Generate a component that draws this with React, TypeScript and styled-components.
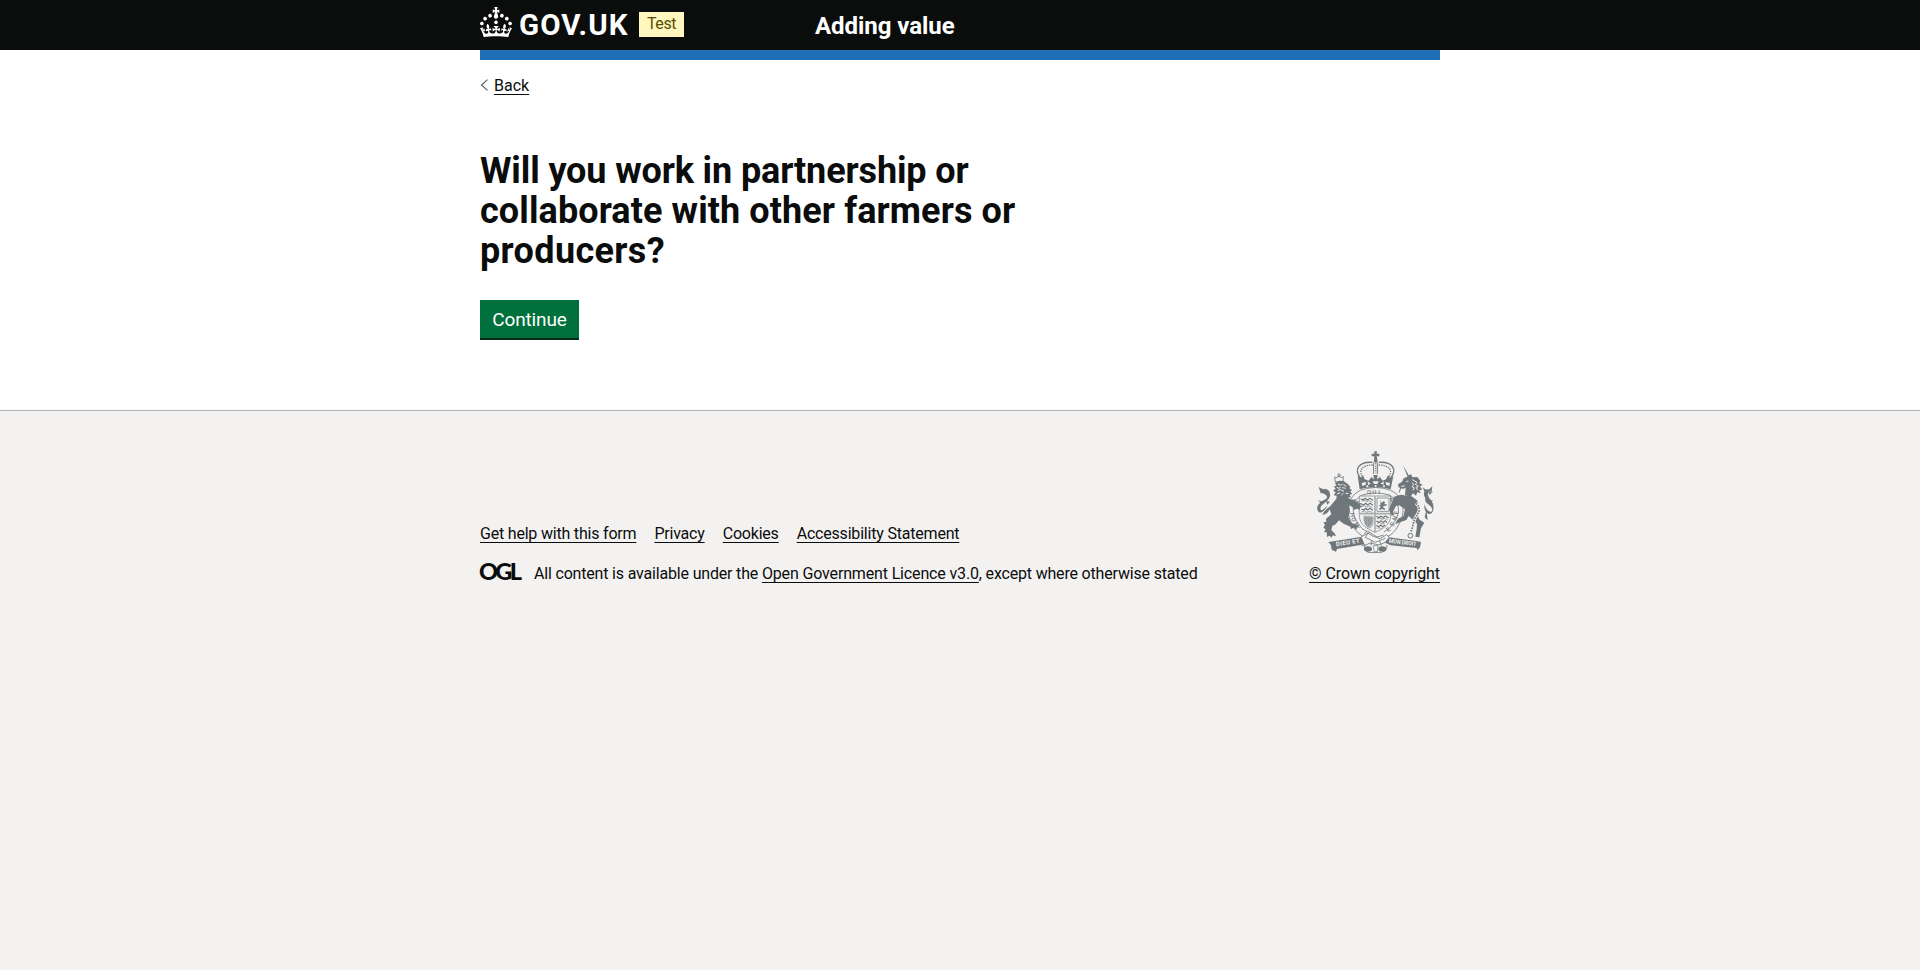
import React from "react";
import styled, { createGlobalStyle } from "styled-components";

const ink = "#0b0c0c";
const sans = `Roboto, "Liberation Sans", Arial, sans-serif`;

const GlobalStyle = createGlobalStyle`
  *, *::before, *::after { box-sizing: border-box; }
  html { background: #f3f2f1; }
  body { margin: 0; background: #fff; color: ${ink}; font-family: ${sans}; font-size: 16px; line-height: 20px; }
`;

const Container = styled.div`
  width: 960px;
  margin: 0 auto;
`;

const Header = styled.header`
  height: 60px;
  background: linear-gradient(${ink} 50px, #fff 50px);
  color: #fff;
`;

const HeaderBar = styled(Container)`
  display: grid;
  grid-template-columns: 335px 1fr;
  height: 60px;
  border-bottom: 10px solid #1d70b8;
`;

const Brand = styled.a`
  display: flex;
  align-items: flex-start;
  color: inherit;
  text-decoration: none;
`;

const Crown = styled.svg`
  flex: none;
  width: 32px;
  height: 30px;
  margin-top: 7px;
`;

const BrandName = styled.span`
  width: 119px;
  padding-left: 7px;
  margin-top: 9px;
  font-size: 29.5px;
  font-weight: 700;
  line-height: 32px;
  letter-spacing: 1.1px;
`;

const PhaseTag = styled.strong`
  width: 45px;
  height: 25px;
  margin: 12px 0 0 8px;
  background: #fff7bf;
  color: #594d00;
  font-size: 16px;
  font-weight: 400;
  line-height: 24px;
  letter-spacing: -0.4px;
  text-align: center;
`;

const ServiceName = styled.a`
  margin-top: 14px;
  color: inherit;
  font-size: 24px;
  font-weight: 700;
  line-height: 25px;
  letter-spacing: -0.05px;
  text-decoration: none;
`;

const Link = styled.a<{ $tracking?: number }>`
  color: ${ink};
  letter-spacing: ${(p) => p.$tracking ?? -0.2}px;
  text-decoration: underline;
  text-decoration-thickness: 1px;
  text-underline-offset: 3px;
`;

const BackRow = styled.nav`
  display: flex;
  gap: 5px;
  height: 20px;
  margin-top: 16px;
`;

const Chevron = styled.svg`
  width: 9px;
  height: 12px;
  margin-top: 3px;
`;

const Main = styled.main`
  padding: 55px 0 72px;
`;

const Heading = styled.h1`
  margin: 0 0 29px;
  font-size: 36px;
  font-weight: 700;
  line-height: 40px;
`;

const HeadingLine = styled.span<{ $tracking: number }>`
  display: block;
  letter-spacing: ${(p) => p.$tracking}px;
`;

const Button = styled.button`
  display: block;
  width: 99px;
  height: 38px;
  padding: 1px 0 0;
  border: 0;
  border-radius: 0;
  background: #00703c;
  box-shadow: 0 2px 0 #002d18;
  color: #fff;
  font: 400 19px/37px ${sans};
  letter-spacing: -0.12px;
`;

const Footer = styled.footer`
  min-height: 560px;
  padding-top: 40px;
  border-top: 1px solid #b1b4b6;
  background: #f3f2f1;
`;

const FooterColumns = styled(Container)`
  display: flex;
  justify-content: space-between;
  align-items: flex-end;
  height: 133px;
`;

const FooterLinks = styled.ul`
  display: flex;
  gap: 18px;
  margin: 0 0 20px;
  padding: 0;
  list-style: none;
`;

const Licence = styled.div`
  display: flex;
  gap: 13px;
  letter-spacing: -0.18px;
`;

const OglMark = styled.span`
  width: 41px;
  height: 20px;
  margin-top: -3px;
  font-family: Lato, ${sans};
  font-size: 23.5px;
  font-weight: 900;
  letter-spacing: -2.7px;
  text-indent: -1px;
`;

const Copyright = styled.a`
  display: flex;
  flex-direction: column;
  align-items: flex-end;
  color: ${ink};
  text-decoration: none;
`;

const Crest = styled.svg`
  width: 125px;
  height: 103px;
  margin-bottom: 11px;
`;

const CopyrightText = styled(Link).attrs({ as: "span" })``;

const crestGrey = "#6f777b";
const paper = "#f3f2f1";

function RoyalCrest() {
  return (
    <Crest viewBox="45 30 375 309" aria-hidden="true" fill={crestGrey}>
      {/* crown */}
      <path d="M223 34h8l-1 7h8v8h-8l2 9h-10l1-9h-8v-8h8z" />
      <circle cx="227" cy="62" r="6" />
      <g fill="none" stroke={crestGrey}>
        <path d="M184 118C158 88 178 64 218 67M269 118C296 88 276 64 236 67" strokeWidth="4" />
        <path d="M191 115C171 91 188 75 218 75M263 115C283 91 266 75 236 75" strokeWidth="4" strokeDasharray="4 3" />
        <path d="M221 68v34M232 68v34" strokeWidth="3" />
        <path d="M227 70v30" strokeWidth="4" strokeDasharray="3 4" />
      </g>
      <path d="M173 108l9 7 7-9 5 12 12 4 8-11 8 7-2-13h13l-2 13 9-7 8 11 10-4 6-12 7 9 9-7-8 40c-24-8-69-8-93 0z" />
      <g fill={paper}>
        <path d="M185 129l13-3-1 8-10 4zM203 124l9 7-8 4zM218 124h18l-4 8h-10zM242 131l9-7v10zM257 126l13 3-2 9-10-4z" />
        <circle cx="202" cy="139" r="3" /><circle cx="227" cy="138" r="3" /><circle cx="252" cy="139" r="3" />
      </g>

      {/* garter ring */}
      <g fill="none" stroke={crestGrey}>
        <path d="M181 151C143 169 133 216 159 258Q172 282 194 291M272 151C312 169 320 216 294 258Q281 282 260 291" strokeWidth="2.5" />
        <path d="M187 165C157 181 151 217 173 249Q184 268 202 276M268 165C299 181 304 217 281 249Q270 268 251 276" strokeWidth="2.5" />
        <path d="M181 151q46-17 91 0M187 165q40-12 81 0" strokeWidth="2.5" />
      </g>
      <g fontFamily={sans} fontSize="18" fontWeight="500">
        <text x="201" y="163">Q</text><text x="217" y="162">U</text><text x="235" y="162">I</text>
        <text transform="translate(150 219) rotate(82)">H</text>
        <text transform="translate(153 235) rotate(72)">O</text>
        <text transform="translate(161 251) rotate(60)">N</text>
        <text transform="translate(265 276) rotate(-40)">E</text>
        <text transform="translate(278 261) rotate(-54)">S</text>
        <text transform="translate(288 243) rotate(-68)">N</text>
        <text transform="translate(294 224) rotate(-80)">E</text>
      </g>

      {/* quartered shield */}
      <path d="M178 168h94v58c0 25-20 40-47 51-27-11-47-26-47-51z" fill={paper} stroke={crestGrey} strokeWidth="2" />
      <path d="M225 168v109M178 221h94" stroke="#aaaeaf" strokeWidth="5" />
      <g fill="none" stroke={crestGrey} strokeWidth="3.5">
        <path d="M182 176l8 4 5-5 7 5 7-5 10 6M183 191l8 4 6-5 6 5 7-5 9 6M184 207l8 3 5-5 6 5 7-5 9 6" />
        <path d="M185 183l8-2 7 4 8-3 9 5M185 199l8-2 7 4 8-3 9 5M185 215l8-2 7 4 8-3 9 3" strokeWidth="2" />
        <path d="M229 229l8 4 5-5 7 5 7-5 10 6M229 243l8 4 6-5 6 5 7-5 5 6M229 257l8 3 5-5 6 5 7-5" />
        <path d="M231 236l8-2 7 4 8-3 9 4M231 250l8-2 7 4 8-3M230 265l7-2 7 3" strokeWidth="2" />
      </g>
      <path d="M231 174h36v40h-36z" fill="none" stroke="#92989b" strokeWidth="3" />
      <path d="M241 181l4 8 5-5 6 2-4 7 9 0-3 5-7-1-2 5 7 4-3 4-6-4-7 4-3-4 6-6-7-3 6-3z" />
      <path d="M190 227h24l8 4-2 24-10 11q-22-10-20-39z" fill="#b5b8b9" />
      <path d="M195 231c8 6 17 2 21 3-1 13-6 22-13 26-8-10-11-17-8-29zM200 235v17M205 236v20M210 236v17" fill="none" stroke={crestGrey} strokeWidth="2" />

      {/* lion */}
      <path d="M104 111l6 3 7-7 6 6 7-3-1 16h-23zM114 102h6v8h-6z" fill="none" stroke={crestGrey} strokeWidth="2.5" />
      <path d="M105 128l12-6 14 1 12 9 8 8-3 5 8 5-5 5 6 7-8 2 4 8-9 1-6 13-7-8-7 7-7-12-8 4 1-10-9-1 6-9-8-5 8-6-6-7 8-1z" />
      <path d="M114 132l8 4 5-3M110 142l8 3 4-4M127 143l10 2M113 151l9-2 10 5M111 162l10-4M130 134l9 5M124 165l6-5M137 160l8 1" fill="none" stroke={paper} strokeWidth="3" />
      <path d="M114 171l18-2 24 10 12-1-3 7 12-2-3 7 10-1-4 7 8 3-9 5 1 6-10-4-7 4-6-9-9-5 2 19-5 17 10 17 16 5 9 9-9-1-2 8-7-7-9 4-2-7-20-9-14-10-10 12-10 5-3 12 11 11 3 8-9-3-5 7-5-6-8 4-1-14-8-1 5-8-7-5 5-9-5-7 9-2-1-9 16-13-5-15c-4 10-11 16-23 16q13-19 23-24z" />
      <path d="M82 197C72 219 58 222 54 213C45 198 62 185 78 177C88 168 71 158 62 160L56 141L68 147C86 144 94 160 89 171C87 184 60 193 61 207C66 217 72 204 82 197z" />
      <path d="M67 154l13 3-4-12 13 10M65 193l-11-12 16 5M79 183l11 2-9 10" />

      {/* unicorn */}
      <path d="M309 76l20 34-5 3z" />
      <path d="M322 110l11-8 4 10 15-1 9 12-3 6 10 6-8 4 7 10-9 1 4 9-10-2-4 10-9-7-8 11-16-6 2-22-8 4-13-5-2-9 12-8 5-10z" />
      <path d="M319 125l6-2M337 119l14 8-5 6 9 6-7 4 6 8M304 139l10-1M336 128l5 6-5 6 7 4-4 7" fill="none" stroke={paper} strokeWidth="3" />
      <path d="M282 170l20-6 33 5 16 12 7 20-6 24 7 14 14 9-10 17-5 27-12-2 4-22 1-17-15-14-10-9-7 12-17 6-17 7 9-17 16-7 5-21-17-12-10 2-9 17 4 10-8 2-8-18z" />
      <path d="M373 193C381 218 399 222 396 205C393 195 371 190 376 174C365 158 377 144 386 149L397 139L395 154C383 153 380 165 390 177C406 193 402 219 390 222C379 223 372 211 373 193z" />
      <path d="M373 154l-5-12 14 10M386 157l13-4-10 12M383 184l16-4-9 11M379 210l4 31-9-9z" />
      <path d="M281 179l-10-6 4 12M298 157l5-17" fill="none" stroke={crestGrey} strokeWidth="3" />
      <path d="M347 190c16 11 12 25 2 38s-9 36-18 49" fill="none" stroke={paper} strokeWidth="9" />
      <path d="M347 190c16 11 12 25 2 38s-9 36-18 49" fill="none" stroke={crestGrey} strokeWidth="5" strokeDasharray="5 3" />
      <circle cx="331" cy="287" r="7" fill={paper} stroke={crestGrey} strokeWidth="3" />

      {/* motto ribbons and buckle */}
      <path d="M85 306l15-2 77-12 20-1 4 18-15 5-75 13-3 8-13-6-2-13zM363 306l-14-3-72-10-18-2-4 17 17 8 78 8 2 7 8-9z" />
      <path d="M183 291l21-12 14 9 22 8 20-12 8 8-12 15-19 8-27-6-16 8z" fill={paper} stroke={crestGrey} strokeWidth="2.5" />
      <path d="M192 282l10-9 29 18 20-6M205 278l-9 14 30 15 30-12M184 318l11-5M195 315q-7 17 12 23l38-1q20-7 15-22M216 302l-3 14M239 303l5 14" fill="none" stroke={crestGrey} strokeWidth="2.5" />
      <ellipse cx="204" cy="327" rx="12" ry="8" /><ellipse cx="247" cy="327" rx="12" ry="8" />
      <path d="M220 317h14l-2 18h-10z" fill={paper} stroke={crestGrey} strokeWidth="2" />
      <g fill={paper} fontFamily={sans} fontSize="18" fontWeight="700">
        <text transform="translate(109 319) rotate(-9)" textLength="72">DIEU ET</text>
        <text transform="translate(266 308) rotate(7)" textLength="83" lengthAdjust="spacingAndGlyphs">MON DROIT</text>
      </g>
    </Crest>
  );
}

const footerLinks = ["Get help with this form", "Privacy", "Cookies", "Accessibility Statement"];

export default function App() {
  return (
    <>
      <GlobalStyle />
      <Header>
        <HeaderBar>
          <Brand href="#">
            <Crown viewBox="0 0 32 30" fill="#fff" aria-hidden="true">
              <path d="M22.6 10.4c-1 .4-2-.1-2.4-1-.4-.9.1-2 1-2.4.9-.4 2 .1 2.4 1s-.1 2-1 2.4m-5.9 6.7c-.9.4-2-.1-2.4-1-.4-.9.1-2 1-2.4.9-.4 2 .1 2.4 1s-.1 2-1 2.4m10.8-3.7c-1 .4-2-.1-2.4-1-.4-.9.1-2 1-2.4.9-.4 2 .1 2.4 1s0 2-1 2.4m3.3 4.8c-1 .4-2-.1-2.4-1-.4-.9.1-2 1-2.4.9-.4 2 .1 2.4 1s-.1 2-1 2.4M17 4.7l2.3 1.2V2.5l-2.3.7-.2-.2.9-3h-3.4l.9 3-.2.2c-.1.1-2.3-.7-2.3-.7v3.4L15 4.7c.1.1.1.2.2.2l-1.3 4c-.1.2-.1.4-.1.6 0 1.1.8 2 1.9 2.2h.7c1-.2 1.9-1.1 1.9-2.1 0-.2 0-.4-.1-.6l-1.3-4c-.1-.2 0-.2.1-.3m-7.6 5.7c.9.4 2-.1 2.4-1 .4-.9-.1-2-1-2.4-.9-.4-2 .1-2.4 1s0 2 1 2.4m-5 3c.9.4 2-.1 2.4-1 .4-.9-.1-2-1-2.4-.9-.4-2 .1-2.4 1s.1 2 1 2.4m-3.2 4.8c.9.4 2-.1 2.4-1 .4-.9-.1-2-1-2.4-.9-.4-2 .1-2.4 1s0 2 1 2.4m14.8 11c4.4 0 8.6.3 12.3.8 1.1-4.5 2.4-7 3.7-8.8l-2.5-.9c.2 1.3.3 1.9 0 2.7-.4-.4-.8-1.1-1.1-2.3l-1.2 4c.7-.5 1.3-.8 2-.9-1.1 2.5-2.6 3.1-3.5 3-1.1-.2-1.7-1.2-1.5-2.1.3-1.2 1.5-1.5 2.1-.1 1.1-2.3-.8-3-2-2.3 1.9-1.9 2.1-3.5.6-5.6-2.1 1.6-2.1 3.2-1.2 5.5-1.2-1.4-3.2-.6-2.5 1.6.9-1.4 2.1-.5 1.9.8-.2 1.1-1.7 2.1-3.5 1.9-2.7-.2-2.9-2.1-2.9-3.6.7-.1 1.9.5 2.9 1.9l.4-4.3c-1.1 1.1-2.1 1.4-3.2 1.4.4-1.2 2.1-3 2.1-3h-5.4s1.7 1.9 2.1 3c-1.1 0-2.1-.2-3.2-1.4l.4 4.3c1-1.4 2.2-2 2.9-1.9-.1 1.5-.2 3.4-2.9 3.6-1.9.2-3.4-.8-3.5-1.9-.2-1.3 1-2.2 1.9-.8.7-2.3-1.2-3-2.5-1.6.9-2.2.9-3.9-1.2-5.5-1.5 2-1.3 3.7.6 5.6-1.2-.7-3.1 0-2 2.3.6-1.4 1.8-1.1 2.1.1.2.9-.3 1.9-1.5 2.1-.9.2-2.4-.5-3.5-3 .6 0 1.2.3 2 .9l-1.2-4c-.3 1.1-.7 1.9-1.1 2.3-.3-.8-.2-1.4 0-2.7l-2.9.9C1.3 23 2.6 25.5 3.7 30c3.7-.5 7.9-.8 12.3-.8" />
            </Crown>
            <BrandName>GOV.UK</BrandName>
            <PhaseTag>Test</PhaseTag>
          </Brand>
          <ServiceName href="#">Adding value</ServiceName>
        </HeaderBar>
      </Header>
      <Container>
        <BackRow>
          <Chevron viewBox="0 0 9 12" aria-hidden="true">
            <path d="M7.5 .7L1.5 6l6 5.3" fill="none" stroke="#505a5f" strokeWidth="1.1" />
          </Chevron>
          <Link href="#" $tracking={0}>Back</Link>
        </BackRow>
        <Main>
          <Heading>
            <HeadingLine $tracking={-0.13}>Will you work in partnership or </HeadingLine>
            <HeadingLine $tracking={0.1}>collaborate with other farmers or </HeadingLine>
            <HeadingLine $tracking={0.35}>producers?</HeadingLine>
          </Heading>
          <Button type="button">Continue</Button>
        </Main>
      </Container>
      <Footer>
        <FooterColumns>
          <div>
            <FooterLinks>
              {footerLinks.map((label) => (
                <li key={label}><Link href="#">{label}</Link></li>
              ))}
            </FooterLinks>
            <Licence>
              <OglMark>OGL</OglMark>
              <span>
                All content is available under the{" "}
                <Link href="#" $tracking={-0.15}>Open Government Licence v3.0</Link>, except where otherwise stated
              </span>
            </Licence>
          </div>
          <Copyright href="#">
            <RoyalCrest />
            <CopyrightText $tracking={-0.09}>© Crown copyright</CopyrightText>
          </Copyright>
        </FooterColumns>
      </Footer>
    </>
  );
}
